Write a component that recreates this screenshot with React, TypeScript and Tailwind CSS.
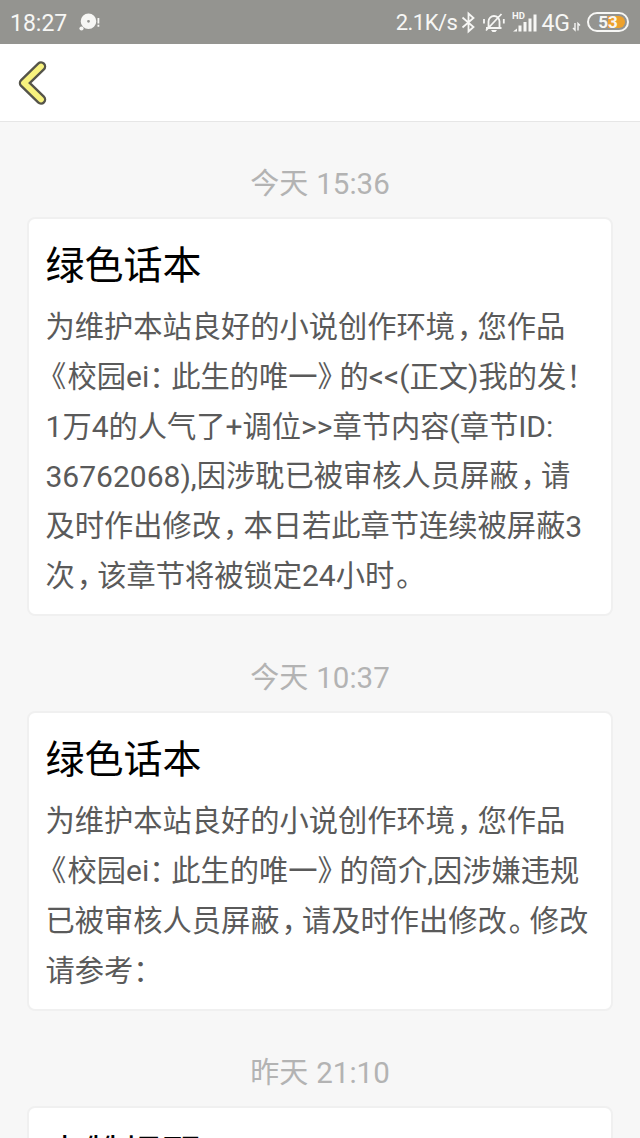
import React from 'react';

const messages = [
  {
    time: ['今天', '15:36'],
    title: '绿色话本',
    lines: [
      '为维护本站良好的小说创作环境，您作品',
      '《校园ei：此生的唯一》的<<(正文)我的发！',
      '1万4的人气了+调位>>章节内容(章节ID:',
      '36762068),因涉耽已被审核人员屏蔽，请',
      '及时作出修改，本日若此章节连续被屏蔽3',
      '次，该章节将被锁定24小时。',
    ],
  },
  {
    time: ['今天', '10:37'],
    title: '绿色话本',
    lines: [
      '为维护本站良好的小说创作环境，您作品',
      '《校园ei：此生的唯一》的简介,因涉嫌违规',
      '已被审核人员屏蔽，请及时作出修改。修改',
      '请参考：',
    ],
  },
  {
    time: ['昨天', '21:10'],
    title: '点赞提醒',
    lines: [],
  },
];

// Full-width punctuation is set on a narrower advance than the characters
const punctuation = {
  '，': 'w-[22.5px] pl-[2px]',
  '：': 'w-[22px]',
  '！': 'w-[16px]',
  '。': 'w-[23px] pl-[2px]',
  '《': 'w-[22px] pl-[6px]',
  '》': 'w-[22px]',
};

function Line({ text }) {
  const parts = text.match(/[，：！。《》]|[\x20-\x7e]+|[^\x20-\x7e，：！。《》]+/g) || [];
  return (
    <div className="flex h-[49.8px] items-center leading-[48px]">
      {parts.map((part, i) => {
        if (punctuation[part]) {
          return (
            <span key={i} className={`shrink-0 text-[29.25px] leading-[51px] [font-feature-settings:'halt'] ${punctuation[part]}`}>
              {part}
            </span>
          );
        }
        if (/^[\x20-\x7e]/.test(part)) {
          return <span key={i} className="text-[30px]">{part}</span>;
        }
        return <span key={i} className="text-[29.25px] leading-[51px]">{part}</span>;
      })}
    </div>
  );
}

function StatusBar() {
  return (
    <header className="flex h-11 items-center bg-[#949490] pl-2.5 pr-[11px] pt-0.5 text-[#f7f7f5]">
      <span className="text-[23px] leading-none">18:27</span>
      <svg className="ml-3 h-6 w-[22px]" viewBox="0 0 22 24" fill="currentColor">
        <path fillRule="evenodd" d="M9.500 2.500a7.800 7.800 0 1 1 0 15.600a7.800 7.800 0 0 1 0-15.600zm0 6.400a1.400 1.400 0 1 0 0 2.800a1.400 1.400 0 0 0 0-2.800z" />
        <circle cx="2.500" cy="17.500" r="2.100" />
        <path d="M18.500 7h1.800v5.500h-1.800zM18.500 13.800h1.800v2h-1.800z" />
      </svg>
      <span className="ml-auto text-[22px] leading-none tracking-[-0.5px]">2.1K/s</span>
      <svg className="ml-[4px] h-6 w-[15px]" viewBox="0 0 15 24" fill="none" stroke="currentColor" strokeWidth="1.800">
        <path d="M1.500 6.500L12.500 16L7.500 20.500V2.500L12.500 7L1.500 16.500" />
      </svg>
      <svg className="ml-[7px] h-6 w-[22px]" viewBox="0 0 22 24" fill="none" stroke="currentColor" strokeWidth="1.800">
        <path d="M3 17h15.500M5.500 17v-6.500a5.500 5.500 0 0 1 11 0V17M3 19.500L18.500 3M1 8v4.500M20.800 8v4.500" />
        <path d="M8 19h6l-1.500 2h-3z" fill="currentColor" stroke="none" />
      </svg>
      <svg className="ml-[7px] h-7 w-[27px]" viewBox="0 0 27 28" fill="currentColor">
        <text x="0" y="9.500" fontSize="9.500" fontWeight="700" fontFamily="Roboto">HD</text>
        <path d="M1 22.500l4-3v3zM6.500 16.500h3v6h-3zM11.500 13h3v9.500h-3zM16.500 9.500h3v13h-3zM21.500 5.500h3v17h-3z" />
      </svg>
      <span className="ml-[2px] text-[23px] leading-none">4G</span>
      <svg className="ml-0.5 h-6 w-[9px]" viewBox="0 0 9 24" fill="none" stroke="currentColor" strokeWidth="1.400">
        <path d="M3 12v7L1 17M6 19.500v-7l2 2" />
      </svg>
      <div className="ml-1.5 h-5 w-[42px] -translate-y-px rounded-full border-2 border-current p-0.5">
        <div className="flex h-3 items-center justify-center rounded-full bg-[linear-gradient(90deg,#949490_50%,#eda12c_50%)] text-[17px] font-bold leading-none">
          53
        </div>
      </div>
    </header>
  );
}

export default function App() {
  return (
    <div className="h-[1138px] w-[640px] overflow-hidden bg-[#f7f7f7] font-['Roboto','Noto_Sans_CJK_SC',sans-serif]">
      <StatusBar />
      <nav className="flex h-[78px] items-center border-b border-[#e6e6e6] bg-white pl-[17px]">
        <svg className="h-11 w-[30px]" viewBox="0 0 30 44" fill="none" strokeLinecap="round" strokeLinejoin="round">
          <path d="M24 5.500L7 22L24 38.500" stroke="#55544a" strokeWidth="10.500" />
          <path d="M24 5.500L7 22L24 38.500" stroke="#f7f27e" strokeWidth="5.800" />
        </svg>
      </nav>
      <main lang="zh-CN">
        {messages.map((message, i) => (
          <section key={i}>
            <div className="flex h-[95px] items-end justify-center pb-[11px] text-[#b3b3b3]">
              <span className="text-[29px] leading-[44px]">{message.time[0]}</span>
              <span className="ml-2 text-[29.500px] leading-[44px]">{message.time[1]}</span>
            </div>
            <article className="mx-[27px] rounded-lg border-2 border-[#f0f0f0] bg-white px-[16.5px] pb-[13px] pt-[18px]">
              <h2 className="h-[65.5px] text-[39px] leading-[58px] text-black">{message.title}</h2>
              <div className="text-[#5a5a5a]">
                {message.lines.map((line, j) => (
                  <Line key={j} text={line} />
                ))}
              </div>
            </article>
          </section>
        ))}
      </main>
    </div>
  );
}
